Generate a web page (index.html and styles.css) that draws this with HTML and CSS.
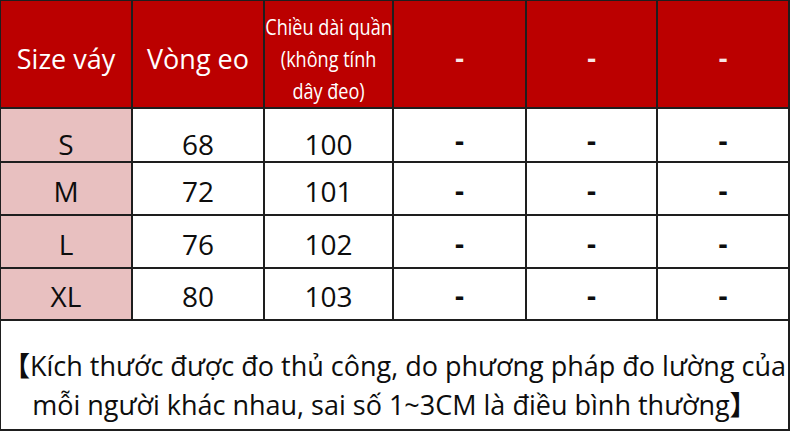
FILE: index.html
```html
<!DOCTYPE html>
<html lang="vi">
<head>
<meta charset="utf-8">
<title>Bảng size váy</title>
<link rel="stylesheet" href="styles.css">
</head>
<body>
<div class="sheet">
  <div class="cell head"><span>Size váy</span></div>
  <div class="cell head"><span>Vòng eo</span></div>
  <div class="cell head small"><span class="narrow">Chiều dài quần<br>(không tính<br>dây đeo)</span></div>
  <div class="cell head dash"><span>-</span></div>
  <div class="cell head dash"><span>-</span></div>
  <div class="cell head dash"><span>-</span></div>

  <div class="cell size first">S</div>
  <div class="cell num first">68</div>
  <div class="cell num first">100</div>
  <div class="cell dash first">-</div>
  <div class="cell dash first">-</div>
  <div class="cell dash first">-</div>

  <div class="cell size">M</div>
  <div class="cell num">72</div>
  <div class="cell num">101</div>
  <div class="cell dash">-</div>
  <div class="cell dash">-</div>
  <div class="cell dash">-</div>

  <div class="cell size">L</div>
  <div class="cell num">76</div>
  <div class="cell num">102</div>
  <div class="cell dash">-</div>
  <div class="cell dash">-</div>
  <div class="cell dash">-</div>

  <div class="cell size">XL</div>
  <div class="cell num">80</div>
  <div class="cell num">103</div>
  <div class="cell dash">-</div>
  <div class="cell dash">-</div>
  <div class="cell dash">-</div>

  <div class="note">
    <p><span class="br">【</span>Kích thước được đo thủ công, do phương pháp đo lường của</p>
    <p>mỗi người khác nhau, sai số 1~3CM là điều bình thường<span class="br">】</span></p>
  </div>
</div>
</body>
</html>
```
FILE: styles.css
```css
html, body {
  margin: 0;
  padding: 0;
  background: #ffffff;
}

.sheet {
  width: 790px;
  height: 431px;
  box-sizing: border-box;
  padding: 1px 2px 2px 1px;
  display: grid;
  grid-template-columns: 130px 130px 127px 131px 129px 130px;
  grid-template-rows: 106px 52px 51px 51px 50px 108px;
  gap: 2px;
  background: #1e1e1e;
  font-family: "Open Sans", "Noto Sans", "Noto Sans CJK SC", sans-serif;
  color: #0d0d0d;
}

.cell {
  display: flex;
  align-items: center;
  justify-content: center;
  background: #ffffff;
  font-size: 28px;
  line-height: 1;
  box-sizing: border-box;
}

.head {
  background: #bb0000;
  color: #ffffff;
  font-size: 27px;
  padding-top: 9px;
}

.head.small {
  font-size: 21px;
  line-height: 32px;
  padding-top: 10px;
}

.narrow {
  display: inline-block;
  text-align: center;
  white-space: nowrap;
  transform: scaleX(0.86);
}

.dash {
  font-weight: 700;
  padding-top: 2px;
}

.head.dash {
  color: #f8e4e4;
  font-size: 27px;
  padding-top: 6px;
}

.size {
  background: #e8c0c0;
}

.num, .size {
  padding-top: 4px;
}

.num.first, .size.first {
  padding-top: 18px;
}

.dash.first {
  padding-top: 9px;
}

.note {
  grid-column: 1 / -1;
  background: #ffffff;
  display: flex;
  flex-direction: column;
  justify-content: center;
  align-items: center;
  padding-top: 20px;
  font-size: 27px;
  line-height: 38px;
}

.note p {
  margin: 0;
  white-space: nowrap;
}

.br {
  font-family: "Noto Sans CJK SC", sans-serif;
  font-weight: 700;
}
```
